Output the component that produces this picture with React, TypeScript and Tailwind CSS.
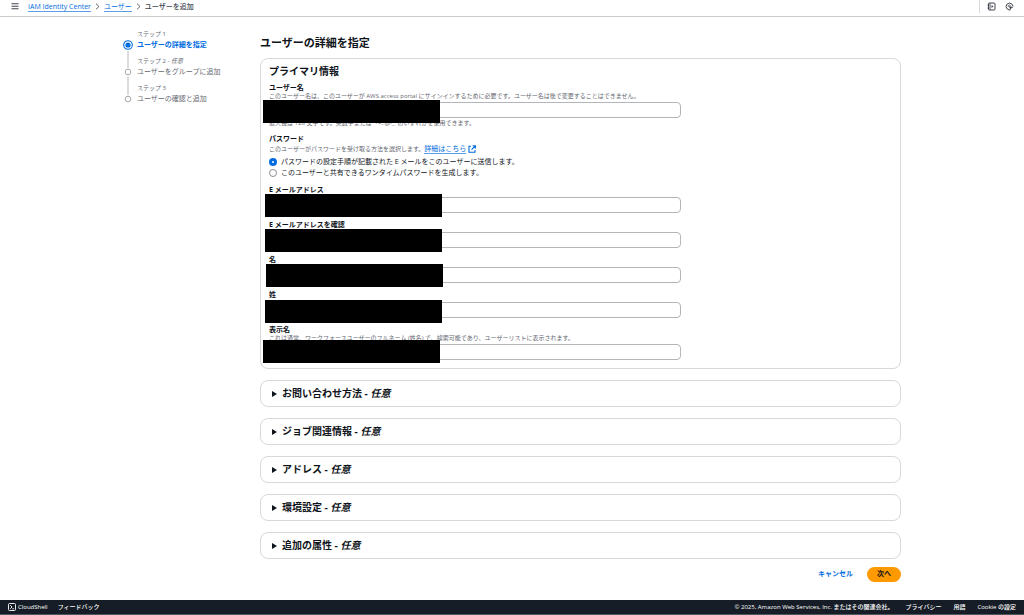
import { useState } from "react";
import clsx from "clsx";

const STEPS = [
  { label: "ステップ 1", title: "ユーザーの詳細を指定", active: true },
  { label: "ステップ 2", title: "ユーザーをグループに追加", optional: true },
  { label: "ステップ 3", title: "ユーザーの確認と追加" },
];

const NAME_FIELDS = [
  { id: "email", label: "E メールアドレス", mask: "-left-1 -top-[3px]" },
  { id: "email-confirm", label: "E メールアドレスを確認", mask: "-left-1 -top-[3px]" },
  { id: "first-name", label: "名", mask: "-left-[3px] -top-[3px]" },
  { id: "last-name", label: "姓", mask: "-left-1 -top-0.5" },
  {
    id: "display-name",
    label: "表示名",
    description:
      "これは通常、ワークフォースユーザーのフルネーム (姓名) で、検索可能であり、ユーザーリストに表示されます。",
    mask: "-left-1.5 -top-1",
  },
];

const PASSWORD_OPTIONS = [
  { value: "email", label: "パスワードの設定手順が記載された E メールをこのユーザーに送信します。" },
  { value: "otp", label: "このユーザーと共有できるワンタイムパスワードを生成します。" },
];

const SECTIONS = ["お問い合わせ方法", "ジョブ関連情報", "アドレス", "環境設定", "追加の属性"];

type FieldProps = {
  id: string;
  label: string;
  description?: string;
  constraint?: string;
  mask: string;
};

function Field({ id, label, description, constraint, mask }: FieldProps) {
  return (
    <div>
      <label htmlFor={id} className="block text-[7px] leading-2 font-bold">
        {label}
      </label>
      {description && (
        <p className="text-[6px] leading-2 text-[#656871]">{description}</p>
      )}
      <div
        className={clsx(
          "relative w-full max-w-[412px]",
          description ? "mt-0.5" : "mt-[3px]"
        )}
      >
        <input
          id={id}
          type="text"
          className="block h-4 w-full rounded-[4px] border border-[#b4b5bb] px-1.5 text-[7px] outline-none focus:border-[#006ce0]"
        />
        {/* Redacted value */}
        <span aria-hidden="true" className={clsx("absolute h-[23px] w-[177px] bg-black", mask)} />
      </div>
      {constraint && (
        <p className="mt-px text-[6px] leading-2 text-[#656871]">{constraint}</p>
      )}
    </div>
  );
}

function Chevron() {
  return (
    <svg viewBox="0 0 5 7" className="h-[7px] w-[5px]" fill="none" stroke="#656871" strokeWidth="1">
      <path d="M1 0.7 4 3.5 1 6.3" />
    </svg>
  );
}

function Header() {
  return (
    <header className="flex h-[17px] items-start border-b border-[#c9cbd0] text-[7px]">
      <button aria-label="メニュー" className="ml-[11px] flex h-[13px] items-center">
        <svg viewBox="0 0 8 7" className="h-[7px] w-2" stroke="#424650" strokeWidth="1.1">
          <path d="M0.5 0.8h7M0.5 3.3h7M0.5 5.8h7" />
        </svg>
      </button>
      <nav aria-label="breadcrumb" className="ml-[9px] flex h-[13px] items-center gap-1">
        <a href="#" className="border-b border-[#5c9fe8] leading-[9px] text-[#006ce0]">
          IAM Identity Center
        </a>
        <Chevron />
        <a href="#" className="border-b border-[#5c9fe8] leading-[9px] text-[#006ce0]">
          ユーザー
        </a>
        <Chevron />
        <span className="leading-[9px] font-medium text-[#424650]">ユーザーを追加</span>
      </nav>
      <div className="mr-[10px] ml-auto flex h-[13px] items-center gap-[9px] border-l border-[#d5d7db] pl-[7px] text-[#424650]">
        <button aria-label="チュートリアル">
          <svg viewBox="0 0 9 9" className="size-[9px]" fill="none" stroke="currentColor">
            <rect x="1.5" y="1" width="6.5" height="7" rx="1" />
            <path d="M3 1v7M0.5 3h1.5M0.5 6h1.5" strokeWidth="0.9" />
            <path d="M4.5 3v3l2-1.5z" fill="currentColor" stroke="none" />
          </svg>
        </button>
        <button aria-label="設定">
          <svg viewBox="0 0 9 9" className="size-[9px]" fill="none" stroke="currentColor">
            <path d="M5.6 7.8 4.5 8 1.8 6.7 1 4.5 1.8 2.3 4.5 1 7.2 2.3 8 4.5" strokeLinejoin="round" />
            <path d="M4 4 8 5.4 6.2 6 5.4 7.8z" fill="currentColor" strokeWidth="0.3" />
            <path d="M3.2 5V3.6L4.5 3l1.2 0.5" strokeWidth="0.7" />
          </svg>
        </button>
      </div>
    </header>
  );
}

function Steps() {
  return (
    <ol>
      {STEPS.map(({ label, title, active, optional }, i) => (
        <li key={title} className="flex gap-1 pb-[7px]">
          <svg
            viewBox="0 0 10 30"
            className="mt-2.5 -mb-5 h-[30px] w-2.5 shrink-0"
            fill="none"
          >
            {i < STEPS.length - 1 && (
              <path d={active ? "M5 11V28" : "M5 9.5V28"} stroke="#c9cad0" strokeWidth="1.3" />
            )}
            {active ? (
              <>
                <circle cx="5" cy="5" r="4.3" stroke="#006ce0" strokeWidth="1.1" />
                <circle cx="5" cy="5" r="2.6" fill="#006ce0" />
              </>
            ) : (
              <circle cx="5" cy="5" r="2.8" stroke="#a4a7ae" strokeWidth="1" />
            )}
          </svg>
          <div>
            <p className="text-[6px] leading-[9px] text-[#656871]">
              {label}
              {optional && <i> - 任意</i>}
            </p>
            <p
              className={clsx(
                "text-[7px] leading-[11px]",
                active ? "font-bold text-[#006ce0]" : "text-[#656871]"
              )}
            >
              {title}
            </p>
          </div>
        </li>
      ))}
    </ol>
  );
}

function PasswordField() {
  const [method, setMethod] = useState("email");

  return (
    <fieldset>
      <legend className="text-[7px] leading-2 font-bold">パスワード</legend>
      <p className="mt-px flex items-center text-[6px] leading-[10px] text-[#656871]">
        このユーザーがパスワードを受け取る方法を選択します。
        <a href="#" className="flex items-center gap-0.5 text-[7px] leading-[9px] text-[#006ce0]">
          <span className="border-b border-[#5c9fe8]">詳細はこちら</span>
          <svg viewBox="0 0 8 8" className="size-2" fill="none" stroke="currentColor" strokeWidth="1.1">
            <path d="M3 1.2H1v6h6V5M4.6 0.8h2.8v2.8M7.2 1 3.6 4.6" />
          </svg>
        </a>
      </p>
      <div className="mt-0.5">
        {PASSWORD_OPTIONS.map(({ value, label }) => (
          <label key={value} className="flex items-center gap-1 text-[7px] leading-[11px]">
            <input
              type="radio"
              name="password-method"
              value={value}
              checked={method === value}
              onChange={() => setMethod(value)}
              className="size-2 appearance-none rounded-full border border-[#8c8c94] checked:border-3 checked:border-[#006ce0]"
            />
            {label}
          </label>
        ))}
      </div>
    </fieldset>
  );
}

function Section({ title }: { title: string }) {
  const [open, setOpen] = useState(false);

  return (
    <section className="rounded-lg border border-[#d7d8dd]">
      <button
        type="button"
        aria-expanded={open}
        onClick={() => setOpen(!open)}
        className="flex h-[25px] w-full items-center gap-[5px] pl-2.5 text-left text-[10px] font-bold"
      >
        <svg viewBox="0 0 6 6" className={clsx("mt-px size-1.5", open && "rotate-90")} fill="currentColor">
          <path d="M1 0 6 3 1 6z" />
        </svg>
        <span>
          {title} - <i>任意</i>
        </span>
      </button>
    </section>
  );
}

function Footer() {
  return (
    <footer className="mt-auto flex h-[15px] items-center border-b border-[#50565e] bg-[#161d26] px-2 text-[6px] leading-2 font-medium text-white">
      <button className="flex items-center gap-0.5">
        <svg viewBox="0 0 8 8" className="size-2" fill="none" stroke="currentColor" strokeWidth="0.9">
          <rect x="0.5" y="0.5" width="7" height="7" rx="1" />
          <path d="M2.2 2.2 4 4 2.2 5.8M4.3 5.8H6" />
        </svg>
        CloudShell
      </button>
      <button className="ml-2.5">フィードバック</button>
      <p className="ml-auto">© 2025, Amazon Web Services, Inc. またはその関連会社。</p>
      <nav className="ml-3 flex gap-3">
        <a href="#">プライバシー</a>
        <a href="#">用語</a>
        <a href="#">Cookie の設定</a>
      </nav>
    </footer>
  );
}

export default function App() {
  return (
    <div
      lang="ja"
      className="flex min-h-screen flex-col bg-white font-['Open_Sans','Noto_Sans_CJK_JP',sans-serif] text-[#0f141a]"
    >
      <Header />
      <div className="mx-auto grid w-full max-w-[778px] grid-cols-[137px_1fr] pt-[13px] pb-4">
        <Steps />

        <main className="pt-[5px]">
          <h1 className="text-[11px] leading-4 font-bold">ユーザーの詳細を指定</h1>

          <form className="mt-[7px] flex flex-col gap-[11px]">
            {/* Primary information */}
            <section className="rounded-lg border border-[#d7d8dd] px-2 pt-[5px] pb-2">
              <h2 className="text-[10px] leading-[14px] font-bold">プライマリ情報</h2>
              <div className="mt-1.5 flex flex-col gap-2">
                <Field
                  id="username"
                  label="ユーザー名"
                  description="このユーザー名は、このユーザーが AWS access portal にサインインするために必要です。ユーザー名は後で変更することはできません。"
                  constraint="最大長は 128 文字です。英数字または '+=,.@-_' のいずれかを使用できます。"
                  mask="-left-1.5 -top-0.5"
                />
                <PasswordField />
                {NAME_FIELDS.map((field) => (
                  <Field key={field.id} {...field} />
                ))}
              </div>
            </section>

            {SECTIONS.map((title) => (
              <Section key={title} title={title} />
            ))}
          </form>

          <div className="mt-2 flex items-center justify-end gap-3.5 text-[7px] font-bold">
            <button className="text-[#006ce0]">キャンセル</button>
            <button className="h-[15px] w-[34px] rounded-full bg-[#ff9900]">次へ</button>
          </div>
        </main>
      </div>
      <Footer />
    </div>
  );
}
